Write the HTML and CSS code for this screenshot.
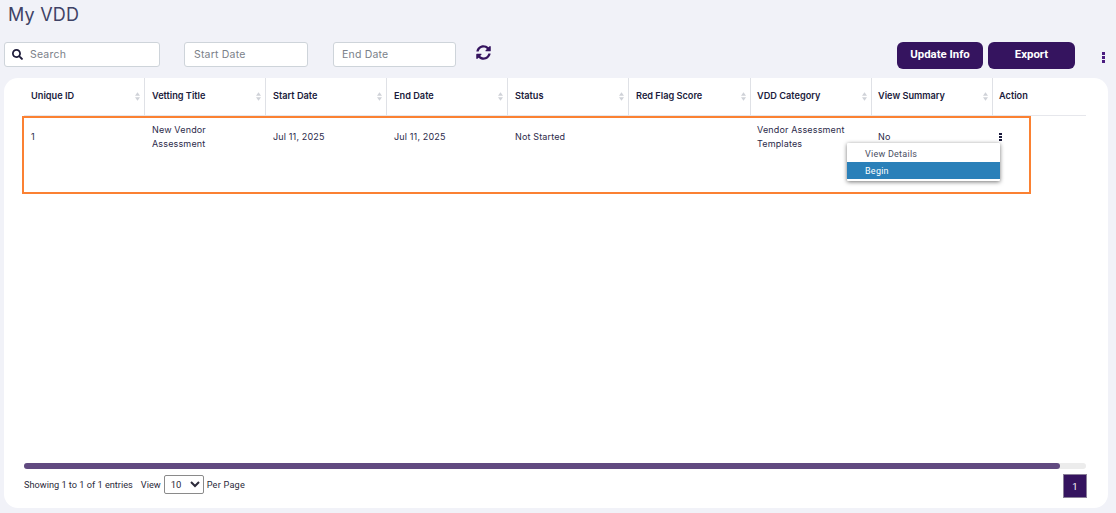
FILE: index.html
```html
<!DOCTYPE html>
<html lang="en">
<head>
<meta charset="utf-8">
<title>My VDD</title>
<link rel="stylesheet" href="styles.css">
</head>
<body>
<h1 class="title">My VDD</h1>
<div class="toolbar">
  <label class="field field-search">
    <svg class="search-icon" viewBox="0 0 512 512"><path d="M505 442.7L405.3 343c-4.5-4.5-10.6-7-17-7H372c27.6-35.3 44-79.7 44-128C416 93.1 322.9 0 208 0S0 93.1 0 208s93.1 208 208 208c48.3 0 92.7-16.4 128-44v16.3c0 6.4 2.5 12.5 7 17l99.7 99.7c9.4 9.4 24.6 9.4 33.9 0l28.3-28.3c9.4-9.4 9.4-24.6.1-34zM208 336c-70.7 0-128-57.2-128-128 0-70.7 57.2-128 128-128 70.7 0 128 57.2 128 128 0 70.7-57.2 128-128 128z"/></svg>
    <span>Search</span>
  </label>
  <div class="field field-start"><span>Start Date</span></div>
  <div class="field field-end"><span>End Date</span></div>
  <svg class="refresh" viewBox="0 0 512 512"><path d="M370.72 133.28C339.458 104.008 298.888 87.962 255.848 88c-77.458.068-144.328 53.178-162.791 126.85-1.344 5.363-6.122 9.15-11.651 9.15H24.103c-7.498 0-13.194-6.807-11.807-14.176C33.933 94.924 134.813 8 256 8c66.448 0 126.791 26.136 171.315 68.685L463.03 40.97C478.149 25.851 504 36.559 504 57.941V192c0 13.255-10.745 24-24 24H345.941c-21.382 0-32.09-25.851-16.971-40.971l41.75-41.749zM32 296h134.059c21.382 0 32.09 25.851 16.971 40.971l-41.75 41.75c31.262 29.273 71.835 45.319 114.876 45.28 77.418-.07 144.315-53.144 162.787-126.849 1.344-5.363 6.122-9.15 11.651-9.15h57.304c7.498 0 13.194 6.807 11.807 14.176C478.067 417.076 377.187 504 256 504c-66.448 0-126.791-26.136-171.315-68.685L48.97 471.03C33.851 486.149 8 475.441 8 454.059V320c0-13.255 10.745-24 24-24z"/></svg>
  <div class="actions">
    <button class="btn btn-update">Update Info</button>
    <button class="btn btn-export">Export</button>
    <div class="dots"><i></i><i></i><i></i></div>
  </div>
</div>
<main class="card">
  <table class="grid">
    <colgroup>
      <col class="c2"><col class="c2"><col class="c2"><col class="c2"><col class="c2"><col class="c6"><col class="c2"><col class="c2"><col class="c9">
    </colgroup>
    <thead>
      <tr>
        <th>Unique ID<svg class="sort" viewBox="0 0 6 10"><path d="M3 0l3 4H0zM3 10L0 6h6z"/></svg></th>
        <th>Vetting Title<svg class="sort" viewBox="0 0 6 10"><path d="M3 0l3 4H0zM3 10L0 6h6z"/></svg></th>
        <th>Start Date<svg class="sort" viewBox="0 0 6 10"><path d="M3 0l3 4H0zM3 10L0 6h6z"/></svg></th>
        <th>End Date<svg class="sort" viewBox="0 0 6 10"><path d="M3 0l3 4H0zM3 10L0 6h6z"/></svg></th>
        <th>Status<svg class="sort" viewBox="0 0 6 10"><path d="M3 0l3 4H0zM3 10L0 6h6z"/></svg></th>
        <th>Red Flag Score<svg class="sort" viewBox="0 0 6 10"><path d="M3 0l3 4H0zM3 10L0 6h6z"/></svg></th>
        <th>VDD Category<svg class="sort" viewBox="0 0 6 10"><path d="M3 0l3 4H0zM3 10L0 6h6z"/></svg></th>
        <th>View Summary<svg class="sort" viewBox="0 0 6 10"><path d="M3 0l3 4H0zM3 10L0 6h6z"/></svg></th>
        <th class="last">Action</th>
      </tr>
    </thead>
    <tbody>
      <tr>
        <td><div class="cell">1</div></td>
        <td><div class="cell">New Vendor Assessment</div></td>
        <td><div class="cell">Jul 11, 2025</div></td>
        <td><div class="cell">Jul 11, 2025</div></td>
        <td><div class="cell">Not Started</div></td>
        <td><div class="cell"></div></td>
        <td><div class="cell">Vendor Assessment Templates</div></td>
        <td><div class="cell">No</div></td>
        <td class="action-cell">
          <div class="cell"><div class="row-dots"><i></i><i></i><i></i></div></div>
          <div class="menu">
            <div class="menu-item">View Details</div>
            <div class="menu-item active">Begin</div>
          </div>
        </td>
      </tr>
    </tbody>
  </table>
  <div class="highlight"></div>
  <div class="spacer"></div>
  <div class="scrollbar"><div class="thumb"></div></div>
  <div class="footer">
    <span class="entries">Showing 1 to 1 of 1 entries</span>
    <span class="view">View</span>
    <select class="per-page"><option>10</option><option>25</option></select>
    <span class="per">Per Page</span>
    <button class="page">1</button>
  </div>
</main>
</body>
</html>
```

FILE: styles.css
```css
* { box-sizing: border-box; }
html, body { margin: 0; height: 100%; }
body {
  width: 1116px;
  height: 513px;
  overflow: hidden;
  background: #f1f2f8;
  font-family: Inter, "Liberation Sans", sans-serif;
  color: #2c2a4a;
}
.title {
  margin: 0;
  padding: 3px 0 0 8px;
  height: 42px;
  font-size: 18px;
  line-height: 24px;
  font-weight: 400;
  color: #3f4266;
  letter-spacing: .2px;
}
.toolbar {
  display: flex;
  align-items: flex-start;
  height: 36px;
  padding-left: 4px;
}
.field {
  display: flex;
  align-items: center;
  height: 25px;
  background: #fff;
  border: 1px solid #ced4da;
  border-radius: 3px;
  font-size: 10.5px;
  letter-spacing: .2px;
  color: #7b8189;
}
.field-search { width: 156px; padding-left: 7px; gap: 7px; }
.field-start { width: 124px; margin-left: 24px; padding-left: 9px; }
.field-end { width: 123px; margin-left: 25px; padding-left: 8px; }
.search-icon { width: 11px; height: 11px; fill: #1d1b3a; }
.refresh { width: 15px; height: 15px; margin: 3px 0 0 20px; fill: #35145f; }
.actions { margin-left: auto; display: flex; align-items: flex-start; }
.btn {
  height: 27px;
  border: 0;
  border-radius: 6px;
  background: #35145f;
  color: #fff;
  font-family: Roboto, Inter, sans-serif;
  font-size: 11.4px;
  font-weight: 700;
  padding: 0 0 3px;
}
.btn-update { width: 86px; }
.btn-export { width: 87px; margin-left: 5px; }
.dots {
  display: flex;
  flex-direction: column;
  gap: 1px;
  margin: 10px 11px 0 27px;
}
.dots i { display: block; width: 3px; height: 3px; background: #4b1d80; }
.card {
  position: relative;
  display: flex;
  flex-direction: column;
  margin-left: 4px;
  width: 1104px;
  height: 430px;
  padding: 0 21px 10px 20px;
  background: #fff;
  border-radius: 14px;
}
.grid {
  width: 1062px;
  table-layout: fixed;
  border-collapse: separate;
  border-spacing: 0;
  font-size: 9px;
}
.c2 { width: 121px; }
.c6 { width: 122px; }
.c9 { width: 93px; }
th {
  position: relative;
  height: 38px;
  padding: 0 7px 3px;
  text-align: left;
  font-family: Inter, sans-serif;
  font-size: 9.2px;
  font-weight: 600;
  color: #1b1b3c;
  border-right: 1px solid #dfe1e6;
  border-bottom: 1px solid #e6e7ec;
}
th.last { border-right: 0; }
.sort {
  position: absolute;
  right: 4px;
  top: 14px;
  width: 5px;
  height: 9px;
  fill: #cfd2d8;
}
td {
  height: 78px;
  padding: 7px 7px 0;
  vertical-align: top;
  color: #2c2a4a;
  letter-spacing: .15px;
  line-height: 14px;
}
th:nth-child(n+7), td:nth-child(n+7) { padding-left: 6px; }
.cell { display: flex; align-items: center; min-height: 28px; }
.action-cell { position: relative; }
.row-dots { display: flex; flex-direction: column; gap: 1px; }
.row-dots i { display: block; width: 2.5px; height: 2px; background: #1b1b3c; }
.menu {
  position: absolute;
  z-index: 2;
  top: 27px;
  right: 86.5px;
  width: 152.5px;
  height: 38px;
  padding-top: 2px;
  background: #fff;
  border-radius: 1px;
  box-shadow: 0 1px 4px rgba(0,0,0,.55);
  font-family: Roboto, sans-serif;
  font-size: 9px;
  letter-spacing: .25px;
}
.menu-item {
  height: 17px;
  padding: 1px 0 0 18px;
  line-height: 17px;
  color: #4a4f63;
}
.menu-item.active { background: #2a80b9; color: #fff; }
.highlight {
  position: absolute;
  left: 18px;
  top: 38px;
  width: 1009px;
  height: 78px;
  border: 2px solid #fb8132;
  pointer-events: none;
}
.spacer { flex: 1; }
.scrollbar {
  width: 1062px;
  height: 6px;
  background: #ececec;
  border-radius: 3px;
}
.thumb {
  width: 1036px;
  height: 6px;
  background: #614a80;
  border-radius: 3px;
}
.footer {
  display: flex;
  align-items: center;
  height: 29px;
  padding-top: 2px;
  font-family: Roboto, sans-serif;
  font-size: 9.2px;
  color: #2c2a3a;
}
.view { margin-left: 8px; }
.per { letter-spacing: .2px; }
.per-page {
  width: 40px;
  height: 19px;
  margin: 0 3px;
  padding: 0 0 0 2px;
  font-family: Roboto, sans-serif;
  font-size: 9.5px;
  background: #fff;
  border: 1px solid #8a8a8a;
  border-radius: 2px;
  color: #2c2a3a;
}
.page {
  align-self: flex-end;
  margin-left: auto;
  width: 24px;
  height: 24px;
  padding: 0;
  background: #35145f;
  color: #fff;
  border: 1px solid #8a7f99;
  font-family: Roboto, sans-serif;
  font-size: 9.5px;
}
```
